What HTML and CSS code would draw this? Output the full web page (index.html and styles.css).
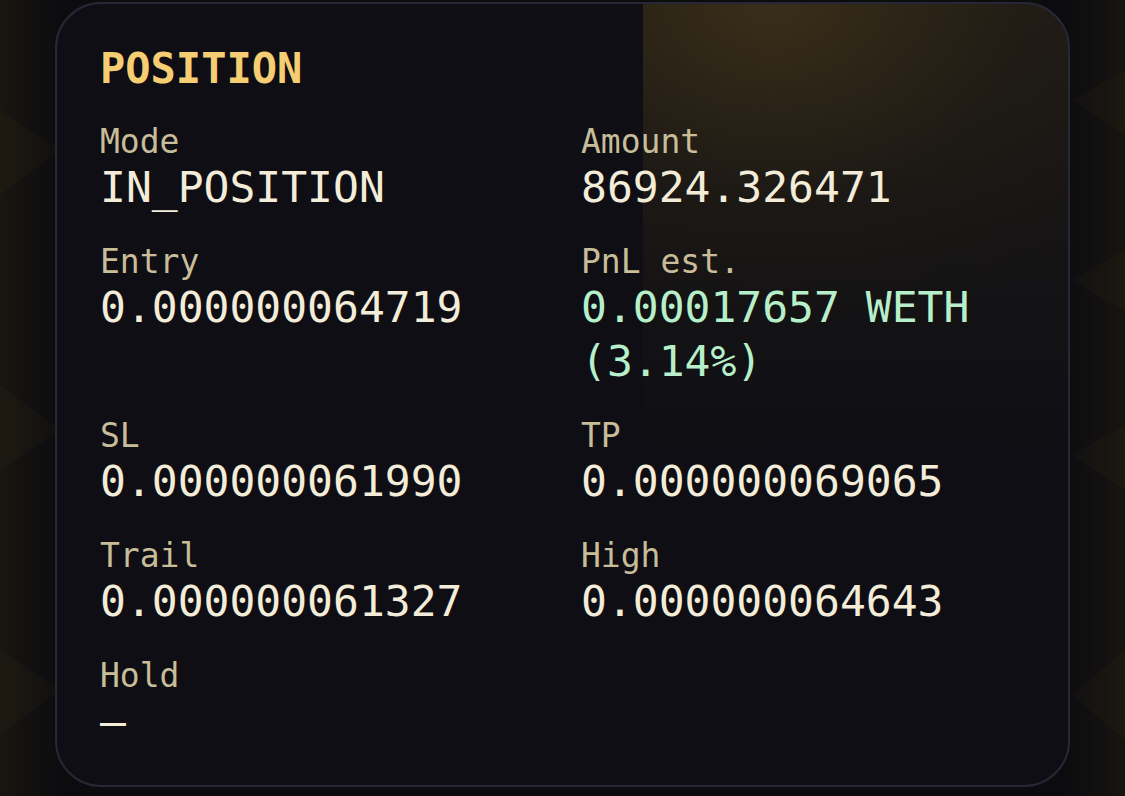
FILE: index.html
```html
<!DOCTYPE html>
<html lang="en">
<head>
<meta charset="utf-8">
<title>Position</title>
<link rel="stylesheet" href="styles.css">
</head>
<body>
<div class="page">
  <svg class="bg-pattern" width="1125" height="796" viewBox="0 0 1125 796" aria-hidden="true">
    <g class="diamonds">
      <polygon points="0,110 60,150 0,195"/>
      <polygon points="0,385 60,430 0,470"/>
      <polygon points="0,650 60,690 0,735"/>
      <polygon points="1125,70 1072,100 1125,135"/>
      <polygon points="1125,250 1072,280 1125,312"/>
      <polygon points="1125,425 1072,455 1125,490"/>
      <polygon points="1125,650 1072,695 1125,740"/>
    </g>
  </svg>
  <section class="card">
    <h2 class="title">POSITION</h2>
    <div class="grid">
      <div class="field">
        <div class="label">Mode</div>
        <div class="value">IN_POSITION</div>
      </div>
      <div class="field">
        <div class="label">Amount</div>
        <div class="value">86924.326471</div>
      </div>
      <div class="field">
        <div class="label">Entry</div>
        <div class="value">0.000000064719</div>
      </div>
      <div class="field">
        <div class="label">PnL est.</div>
        <div class="value value-pos">0.00017657 WETH<br>(3.14%)</div>
      </div>
      <div class="field">
        <div class="label">SL</div>
        <div class="value">0.000000061990</div>
      </div>
      <div class="field">
        <div class="label">TP</div>
        <div class="value">0.000000069065</div>
      </div>
      <div class="field">
        <div class="label">Trail</div>
        <div class="value">0.000000061327</div>
      </div>
      <div class="field">
        <div class="label">High</div>
        <div class="value">0.000000064643</div>
      </div>
      <div class="field">
        <div class="label">Hold</div>
        <div class="value">—</div>
      </div>
    </div>
  </section>
</div>
</body>
</html>
```
FILE: styles.css
```css
* { box-sizing: border-box; }

html, body {
  margin: 0;
  padding: 0;
  width: 1125px;
  height: 796px;
  overflow: hidden;
  background: #0b0b0e;
}

.page {
  position: relative;
  width: 1125px;
  height: 796px;
  padding: 2px 55px 0 55px;
  background:
    linear-gradient(90deg, rgba(40, 32, 18, 0.45) 0px, rgba(12, 12, 15, 0) 60px),
    linear-gradient(270deg, rgba(40, 32, 18, 0.4) 0px, rgba(12, 12, 15, 0) 60px),
    #0c0c0f;
  font-family: "DejaVu Sans Mono", "Liberation Mono", monospace;
  font-variant-numeric: slashed-zero;
}

.bg-pattern {
  position: absolute;
  left: 0;
  top: 0;
}

.diamonds polygon {
  fill: rgba(150, 115, 45, 0.045);
}

.card {
  position: relative;
  width: 1015px;
  height: 785px;
  border: 2px solid #272836;
  border-radius: 46px;
  padding: 40px 43px;
  background: #0e0e14;
  overflow: hidden;
}

.card::before {
  content: "";
  position: absolute;
  left: 586px;
  top: 0;
  right: 0;
  height: 470px;
  background:
    radial-gradient(ellipse 420px 330px at 130px 0px, rgba(95, 75, 30, 0.42), rgba(60, 48, 22, 0.14) 60%, rgba(14, 14, 20, 0) 100%),
    linear-gradient(180deg, rgba(60, 48, 22, 0.32), rgba(14, 14, 20, 0) 100%);
  pointer-events: none;
}

.title {
  position: relative;
  margin: 0 0 29px 0;
  font-size: 42px;
  line-height: 50px;
  font-weight: 700;
  color: #f5cd72;
}

.grid {
  position: relative;
  display: grid;
  grid-template-columns: 481px 1fr;
  row-gap: 29px;
}

.label {
  font-size: 33px;
  line-height: 37px;
  color: #c8bd98;
}

.value {
  font-size: 43px;
  line-height: 54px;
  color: #f3ecd8;
}

.value-pos {
  color: #b7efca;
}
```
